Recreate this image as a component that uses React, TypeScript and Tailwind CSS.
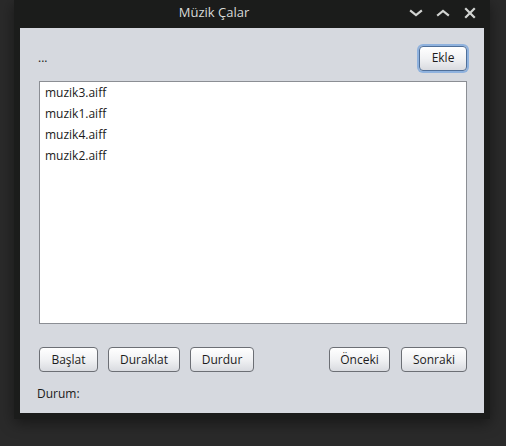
import type { ReactNode } from "react";

const FILES = ["muzik3.aiff", "muzik1.aiff", "muzik4.aiff", "muzik2.aiff"];

function FxButton({
  children,
  width,
  focused,
}: {
  children: ReactNode;
  width: string;
  focused?: boolean;
}) {
  const ring = focused
    ? "shadow-[0_0_0_2px_#8fb2de] border-[#4f6f99]"
    : "border-[#6c6f75]";
  return (
    <button
      type="button"
      className={`${width} ${ring} flex h-[25px] items-center justify-center rounded-[4px] border bg-gradient-to-b from-[#ffffff] via-[#f1f2f4] to-[#d9dbe0] text-[12px] text-[#1c1c1c]`}
    >
      {children}
    </button>
  );
}

function TitleIcon({ kind }: { kind: "down" | "up" | "close" }) {
  return (
    <div className="flex h-full w-[27px] items-center justify-center pb-[3px]">
      <svg width="14" height="12" viewBox="0 0 14 12" fill="none">
        {kind === "down" && (
          <path d="M2 4l5 4 5-4" stroke="#d2d4d2" strokeWidth="2.2" strokeLinecap="square" />
        )}
        {kind === "up" && (
          <path d="M2 8l5-4 5 4" stroke="#d2d4d2" strokeWidth="2.2" strokeLinecap="square" />
        )}
        {kind === "close" && (
          <path d="M3 2l8 8M11 2l-8 8" stroke="#d2d4d2" strokeWidth="2.2" strokeLinecap="square" />
        )}
      </svg>
    </div>
  );
}

export default function App() {
  return (
    <div
      className="h-[446px] w-[506px] overflow-hidden bg-[#2a2a2a] pl-[14px]"
      style={{ fontFamily: '"Open Sans", "Noto Sans", sans-serif' }}
    >
      <div className="flex h-[419px] w-[476px] flex-col bg-[#1b1c1b] shadow-[0_4px_14px_rgba(0,0,0,0.45)]">
        {/* title bar */}
        <div className="flex h-[28px] shrink-0 items-center">
          <div className="w-[388px] pb-[2px] pl-[12px] text-center text-[13px] text-[#d8dad8]">
            Müzik Çalar
          </div>
          <TitleIcon kind="down" />
          <TitleIcon kind="up" />
          <TitleIcon kind="close" />
        </div>

        {/* content */}
        <div className="mx-[6px] flex h-[385px] flex-col bg-[#d6d9df] pl-[19px] pr-[17px] pt-[17px] text-[12px] text-[#1a1a1a]">
          <div className="flex h-[26px] items-center justify-between">
            <span className="-ml-px">...</span>
            <FxButton width="w-[48px]" focused>
              Ekle
            </FxButton>
          </div>

          <div className="mt-[10px] h-[243px] border border-[#8b8e94] bg-white">
            {FILES.map((f) => (
              <div key={f} className="flex h-[21px] items-center pl-[5px]">
                {f}
              </div>
            ))}
          </div>

          <div className="mt-[23px] flex items-center">
            <div className="flex gap-[10px]">
              <FxButton width="w-[59px]">Başlat</FxButton>
              <FxButton width="w-[72px]">Duraklat</FxButton>
              <FxButton width="w-[64px]">Durdur</FxButton>
            </div>
            <div className="ml-auto flex gap-[11px]">
              <FxButton width="w-[61px]">Önceki</FxButton>
              <FxButton width="w-[66px]">Sonraki</FxButton>
            </div>
          </div>

          <div className="mt-[13px] -ml-[2px] leading-[18px]">Durum:</div>
        </div>
      </div>
    </div>
  );
}
